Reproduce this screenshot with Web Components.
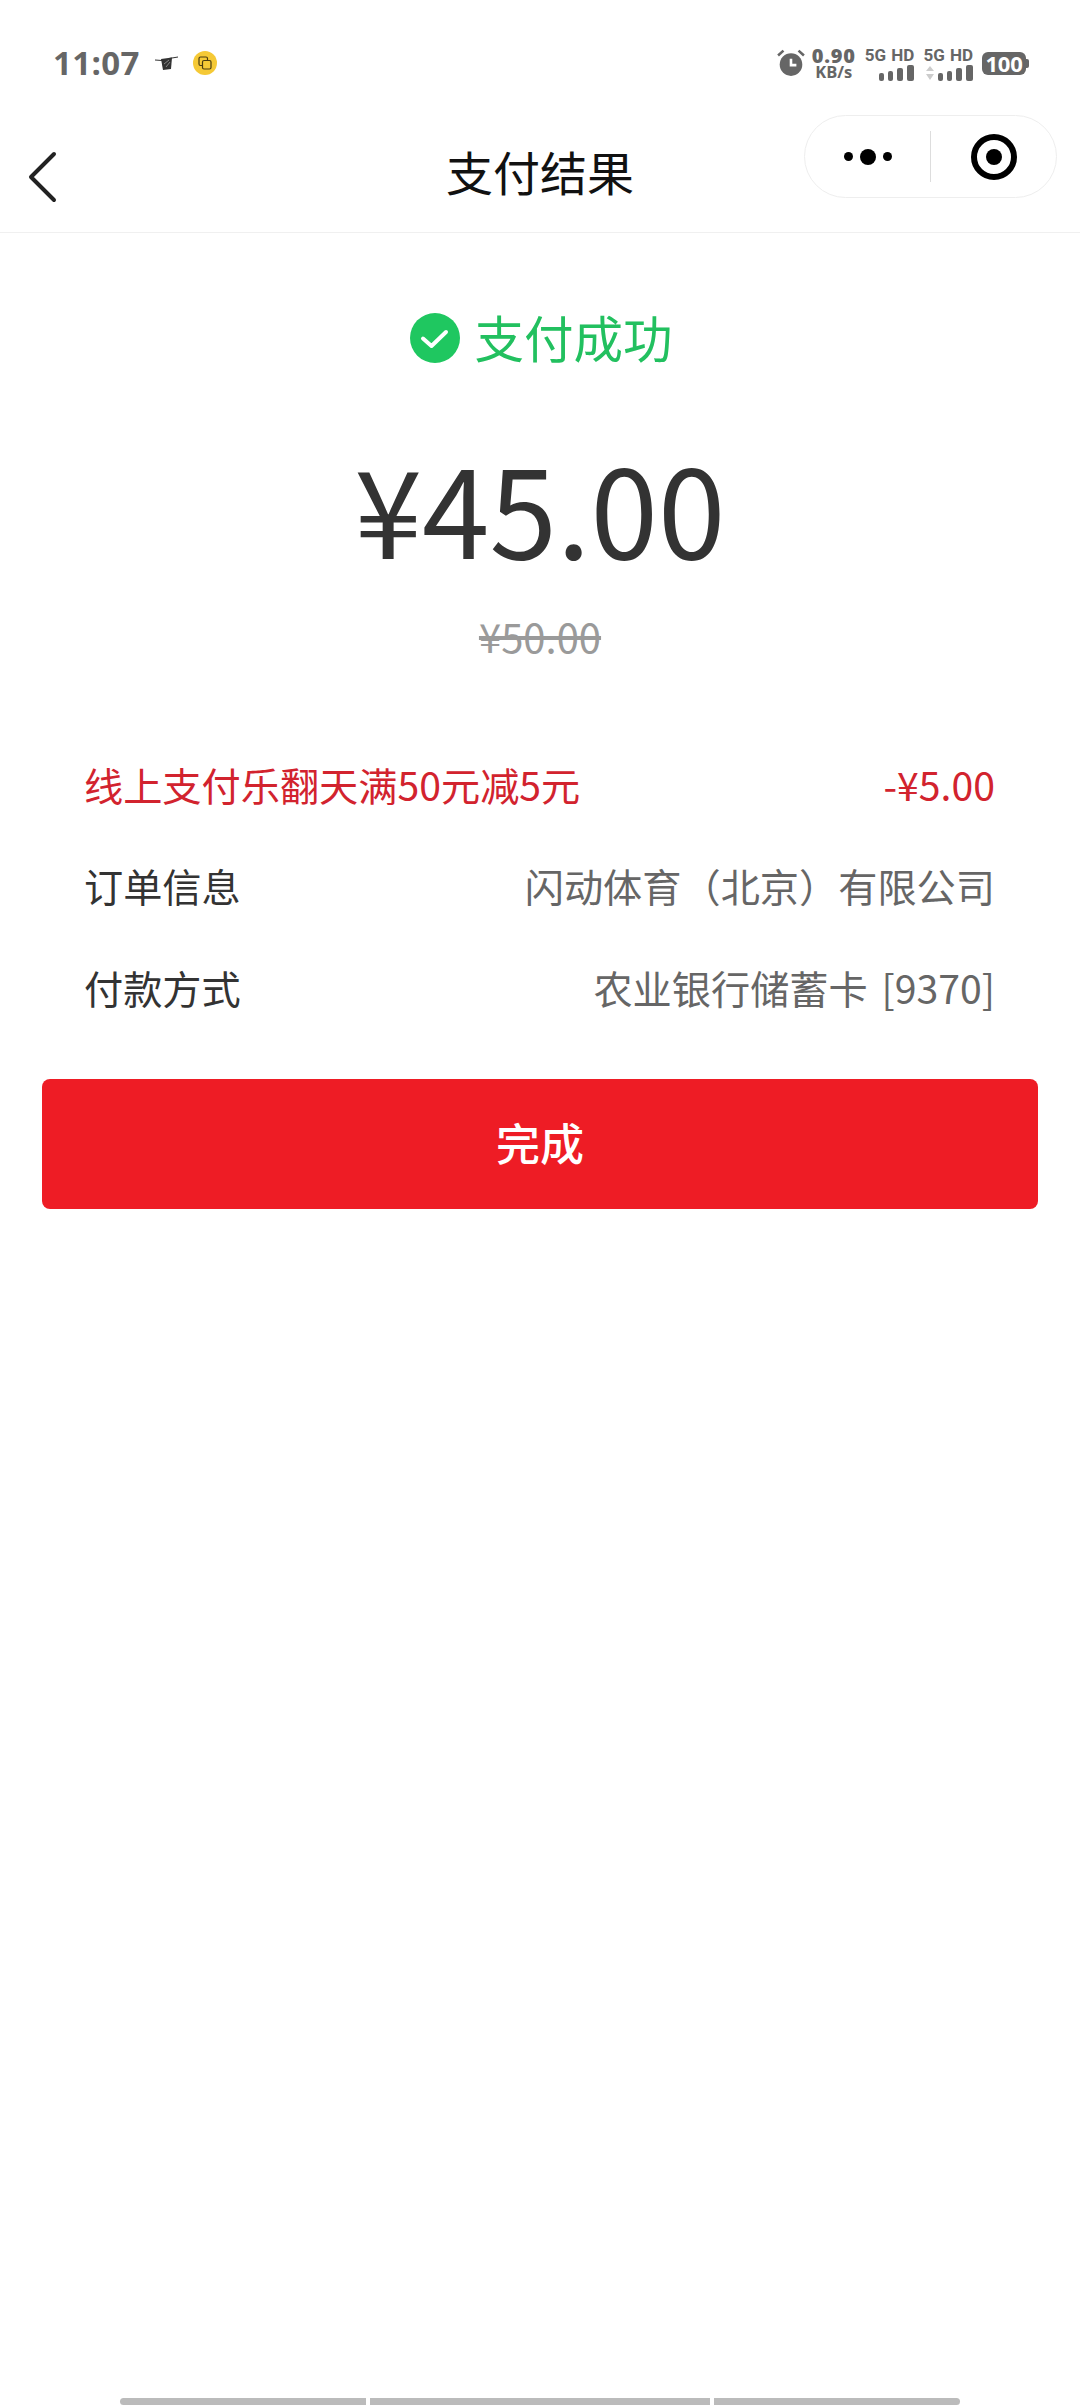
<!DOCTYPE html>
<html lang="zh">
<head>
<meta charset="utf-8">
<style>
html, body { margin: 0; background: #fff; }
body {
  width: 1080px;
  height: 2408px;
  overflow: hidden;
  display: flex;
  flex-direction: column;
  font-family: "Noto Sans CJK SC", sans-serif;
}
gesture-bar { margin-top: auto; }
</style>
</head>
<body>
<status-bar></status-bar>
<nav-bar>支付结果</nav-bar>
<pay-summary amount="¥45.00" original="¥50.00">支付成功</pay-summary>
<detail-list>
  <detail-row tone="red"><span slot="label">线上支付乐翻天满50元减5元</span><span slot="value">-¥5.00</span></detail-row>
  <detail-row><span slot="label">订单信息</span><span slot="value">闪动体育（北京）有限公司</span></detail-row>
  <detail-row><span slot="label">付款方式</span><span slot="value">农业银行储蓄卡 [9370]</span></detail-row>
</detail-list>
<done-button>完成</done-button>
<gesture-bar></gesture-bar>

<script>
class statusBar extends HTMLElement {
    constructor() {
        super();
        this.attachShadow({mode: "open"}).innerHTML = `
<style>
:host { display: flex; align-items: center; height: 108px; padding: 18px 51px 0 53px; box-sizing: border-box; color: #666; font-family: "Open Sans", sans-serif; font-weight: 700; }
.time { font-size: 33px; line-height: 40px; width: 102px; letter-spacing: .4px; }
.left { display: flex; align-items: center; }
.left svg { display: block; }
.yellow { margin-left: 15px; }
.right { margin-left: auto; display: flex; align-items: center; }
.speed { display: flex; flex-direction: column; align-items: center; width: 44px; margin-left: 7px; }
.speed b { display: block; font-size: 20px; line-height: 17px; letter-spacing: .8px; }
.speed span { display: block; font-size: 16.5px; line-height: 15px; }
.net { display: flex; flex-direction: column; align-items: flex-end; margin-left: 9px; font-family: Roboto, sans-serif; font-size: 17px; line-height: 18px; word-spacing: 1px; }
.net + .net { margin-left: 9px; }
.net svg { display: block; margin-top: 1px; }
.battery { margin-left: 9px; display: flex; align-items: center; }
.cell { width: 44px; height: 23px; background: #666; border-radius: 6px; color: #fff; font-size: 22px; line-height: 23px; text-align: center; letter-spacing: -.3px; }
.tip { width: 3px; height: 9px; background: #666; border-radius: 0 2px 2px 0; }
</style>
<div class="left">
  <div class="time">11:07</div>
  <svg width="23" height="15" viewBox="0 0 23 15"><path d="M0 4 L7 4.5 M14 2.5 L23 1" stroke="#333" stroke-width="1"/><path d="M6 3 L17 1.5 L16 13 L8 14 Z" fill="#333"/><path d="M9 8 L14 4 M11 11 L15 6" stroke="#888" stroke-width="1"/></svg>
  <svg class="yellow" width="24" height="24" viewBox="0 0 24 24"><circle cx="12" cy="12" r="12" fill="#f5c936"/><rect x="6" y="6" width="8.5" height="8.5" rx="1.5" fill="none" stroke="#4a3c10" stroke-width="1.2"/><rect x="9.5" y="9.5" width="8.5" height="8.5" rx="1.5" fill="#f5c936" stroke="#4a3c10" stroke-width="1.2"/></svg>
</div>
<div class="right">
  <svg width="28" height="28" viewBox="0 0 26 26"><circle cx="13" cy="14.5" r="10.5" fill="#666"/><path d="M13 9 V15 H18" fill="none" stroke="#fff" stroke-width="2.4"/><path d="M1 6 L6 1.5 M25 6 L20 1.5" stroke="#666" stroke-width="2.4"/></svg>
  <div class="speed"><b>0.90</b><span>KB/s</span></div>
  <div class="net"><span>5G HD</span>
    <svg width="35" height="16" viewBox="0 0 35 16"><rect x="0" y="8" width="5" height="8" rx="2" fill="#666"/><rect x="9" y="6" width="5" height="10" rx="2" fill="#666"/><rect x="18" y="3" width="6" height="13" rx="2" fill="#666"/><rect x="28" y="0" width="7" height="16" rx="2" fill="#666"/></svg>
  </div>
  <div class="net"><span>5G HD</span>
    <svg width="47" height="16" viewBox="0 0 47 16"><path d="M0 6 L4 1 L8 6 Z M0 9 L8 9 L4 15 Z" fill="#ccc"/><rect x="12" y="8" width="5" height="8" rx="2" fill="#666"/><rect x="21" y="6" width="5" height="10" rx="2" fill="#666"/><rect x="30" y="3" width="6" height="13" rx="2" fill="#666"/><rect x="40" y="0" width="7" height="16" rx="2" fill="#666"/></svg>
  </div>
  <div class="battery"><div class="cell">100</div><div class="tip"></div></div>
</div>
`;
    }
}

class navBar extends HTMLElement {
    constructor() {
        super();
        this.attachShadow({mode: "open"}).innerHTML = `
<style>
:host { display: grid; grid-template-columns: 1fr auto 1fr; height: 125px; padding: 0 23px; box-sizing: border-box; border-bottom: 1px solid #f0f0f0; }
.back { align-self: start; margin: 43px 0 0 5px; display: block; }
.title { font-family: "Noto Sans CJK SC", sans-serif; font-size: 47px; line-height: 66px; color: #111; margin-top: 30px; }
.capsule { justify-self: end; align-self: start; margin-top: 7px; width: 253px; height: 83px; box-sizing: border-box; border: 1.5px solid #eee; border-radius: 42px; display: flex; align-items: center; }
.more { width: 125px; display: flex; justify-content: center; align-items: center; gap: 7px; }
.more i { display: block; width: 9px; height: 9px; border-radius: 50%; background: #000; }
.more i.big { width: 16px; height: 16px; }
.line { width: 1px; height: 51px; background: #ddd; }
.scan { flex: 1; display: flex; justify-content: center; }
.scan svg { display: block; }
</style>
<svg class="back" width="30" height="52" viewBox="0 0 30 52"><path d="M26 3 L3 26 L26 49" fill="none" stroke="#222" stroke-width="4" stroke-linecap="round" stroke-linejoin="round"/></svg>
<div class="title"><slot></slot></div>
<div class="capsule">
  <div class="more"><i></i><i class="big"></i><i></i></div>
  <div class="line"></div>
  <div class="scan"><svg width="46" height="46" viewBox="0 0 46 46"><circle cx="23" cy="23" r="20" fill="none" stroke="#000" stroke-width="6"/><circle cx="23" cy="23" r="8" fill="#000"/></svg></div>
</div>
`;
    }
}

class paySummary extends HTMLElement {
    constructor() {
        super();
        this.attachShadow({mode: "open"});
    }

    connectedCallback() {
        this.render();
    }

    render() {
        this.shadowRoot.innerHTML = `
<style>
:host { display: flex; flex-direction: column; align-items: center; padding-top: 80px; }
.state { display: flex; align-items: center; gap: 15px; height: 50px; color: #22c05f; font-size: 49.5px; margin-left: 2px; }
.state svg { display: block; }
.state span { margin-top: -3px; }
.amount { font-size: 121.5px; line-height: 150px; color: #333; margin-top: 68px; }
.original { font-size: 40px; line-height: 50px; color: #9a9a9a; text-decoration: line-through; margin-top: 30px; }
</style>
<div class="state">
  <svg width="50" height="50" viewBox="0 0 50 50"><circle cx="25" cy="25" r="25" fill="#1fc760"/><path d="M13 25.5 L21.5 33 L36 19" fill="none" stroke="#fff" stroke-width="4" stroke-linecap="round" stroke-linejoin="round"/></svg>
  <span><slot></slot></span>
</div>
<div class="amount">${this.getAttribute("amount")}</div>
<div class="original">${this.getAttribute("original")}</div>
`;
    }
}

class detailList extends HTMLElement {
    constructor() {
        super();
        this.attachShadow({mode: "open"}).innerHTML = `
<style>
:host { display: flex; flex-direction: column; padding: 0 85px 0 84px; margin-top: 72px; }
</style>
<slot></slot>
`;
    }
}

class detailRow extends HTMLElement {
    constructor() {
        super();
        this.attachShadow({mode: "open"}).innerHTML = `
<style>
:host { display: flex; justify-content: space-between; align-items: center; height: 101.5px; font-size: 39.2px; color: #333; word-spacing: 5px; }
.value { color: #666; }
:host([tone="red"]) { color: #d2232e; }
:host([tone="red"]) .value { color: #d2232e; }
</style>
<div><slot name="label"></slot></div>
<div class="value"><slot name="value"></slot></div>
`;
    }
}

class doneButton extends HTMLElement {
    constructor() {
        super();
        this.attachShadow({mode: "open"}).innerHTML = `
<style>
:host { display: flex; align-items: center; justify-content: center; height: 130px; box-sizing: border-box; padding-bottom: 4px; margin: 41px 42px 0; background: #ee1c25; border-radius: 8px; color: #fff; font-weight: 500; font-size: 44px; }
</style>
<slot></slot>
`;
    }
}

class gestureBar extends HTMLElement {
    constructor() {
        super();
        this.attachShadow({mode: "open"}).innerHTML = `
<style>
:host { display: flex; gap: 4px; padding: 0 120px; height: 7px; margin-bottom: 3px; }
i { display: block; background: #bbb; }
.a { width: 246px; border-radius: 4px 0 0 4px; }
.b { width: 340px; }
.c { width: 246px; border-radius: 0 4px 4px 0; }
</style>
<i class="a"></i><i class="b"></i><i class="c"></i>
`;
    }
}

customElements.define("status-bar", statusBar);
customElements.define("nav-bar", navBar);
customElements.define("pay-summary", paySummary);
customElements.define("detail-list", detailList);
customElements.define("detail-row", detailRow);
customElements.define("done-button", doneButton);
customElements.define("gesture-bar", gestureBar);
</script>
</body>
</html>
